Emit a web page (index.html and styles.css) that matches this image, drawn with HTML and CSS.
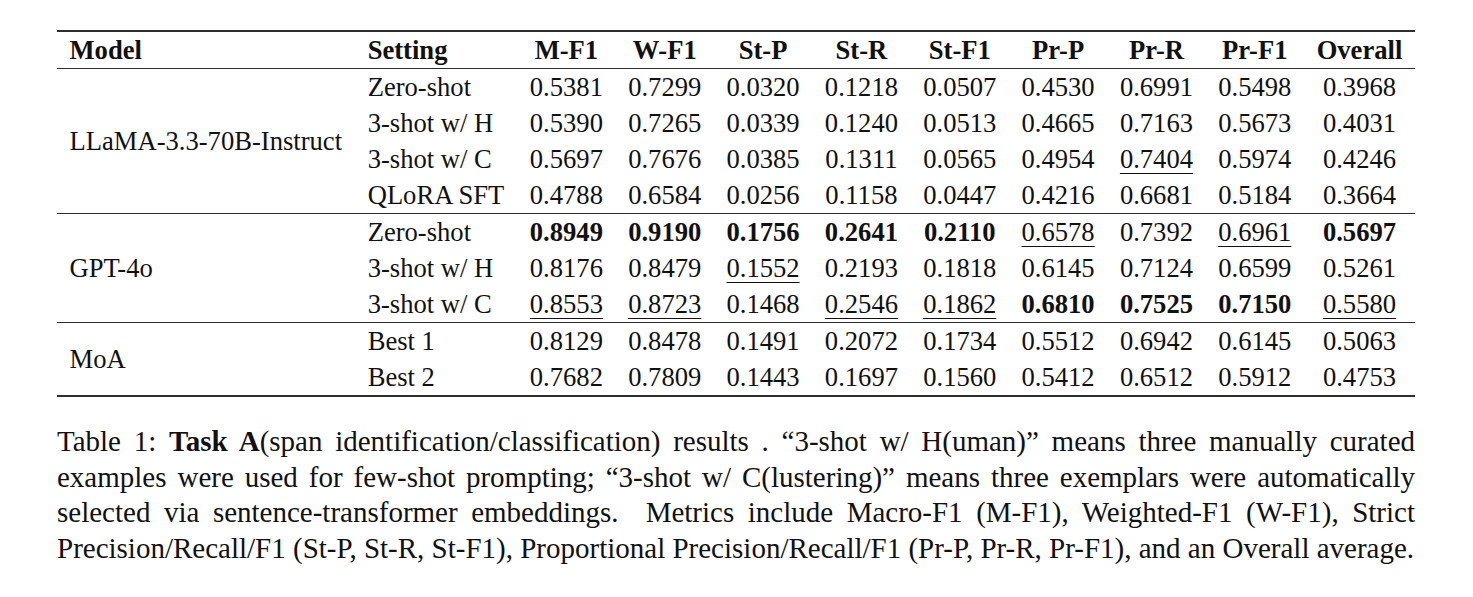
FILE: index.html
```html
<!DOCTYPE html>
<html lang="en">
<head>
<meta charset="utf-8">
<title>Table 1</title>
<link rel="stylesheet" href="styles.css">
</head>
<body>
<div class="figure">
  <table class="results">
    <thead>
      <tr>
        <th class="left">Model</th>
        <th class="left">Setting</th>
        <th>M-F1</th><th>W-F1</th><th>St-P</th><th>St-R</th><th>St-F1</th><th>Pr-P</th><th>Pr-R</th><th>Pr-F1</th><th>Overall</th>
      </tr>
    </thead>
    <tbody>
      <tr>
        <td class="left model" rowspan="4">LLaMA-3.3-70B-Instruct</td>
        <td class="left">Zero-shot</td>
        <td>0.5381</td><td>0.7299</td><td>0.0320</td><td>0.1218</td><td>0.0507</td><td>0.4530</td><td>0.6991</td><td>0.5498</td><td>0.3968</td>
      </tr>
      <tr>
        <td class="left">3-shot w/ H</td>
        <td>0.5390</td><td>0.7265</td><td>0.0339</td><td>0.1240</td><td>0.0513</td><td>0.4665</td><td>0.7163</td><td>0.5673</td><td>0.4031</td>
      </tr>
      <tr>
        <td class="left">3-shot w/ C</td>
        <td>0.5697</td><td>0.7676</td><td>0.0385</td><td>0.1311</td><td>0.0565</td><td>0.4954</td><td><span class="second">0.7404</span></td><td>0.5974</td><td>0.4246</td>
      </tr>
      <tr>
        <td class="left">QLoRA SFT</td>
        <td>0.4788</td><td>0.6584</td><td>0.0256</td><td>0.1158</td><td>0.0447</td><td>0.4216</td><td>0.6681</td><td>0.5184</td><td>0.3664</td>
      </tr>
    </tbody>
    <tbody>
      <tr>
        <td class="left model" rowspan="3">GPT-4o</td>
        <td class="left">Zero-shot</td>
        <td><b>0.8949</b></td><td><b>0.9190</b></td><td><b>0.1756</b></td><td><b>0.2641</b></td><td><b>0.2110</b></td><td><span class="second">0.6578</span></td><td>0.7392</td><td><span class="second">0.6961</span></td><td><b>0.5697</b></td>
      </tr>
      <tr>
        <td class="left">3-shot w/ H</td>
        <td>0.8176</td><td>0.8479</td><td><span class="second">0.1552</span></td><td>0.2193</td><td>0.1818</td><td>0.6145</td><td>0.7124</td><td>0.6599</td><td>0.5261</td>
      </tr>
      <tr>
        <td class="left">3-shot w/ C</td>
        <td><span class="second">0.8553</span></td><td><span class="second">0.8723</span></td><td>0.1468</td><td><span class="second">0.2546</span></td><td><span class="second">0.1862</span></td><td><b>0.6810</b></td><td><b>0.7525</b></td><td><b>0.7150</b></td><td><span class="second">0.5580</span></td>
      </tr>
    </tbody>
    <tbody>
      <tr>
        <td class="left model" rowspan="2">MoA</td>
        <td class="left">Best 1</td>
        <td>0.8129</td><td>0.8478</td><td>0.1491</td><td>0.2072</td><td>0.1734</td><td>0.5512</td><td>0.6942</td><td>0.6145</td><td>0.5063</td>
      </tr>
      <tr>
        <td class="left">Best 2</td>
        <td>0.7682</td><td>0.7809</td><td>0.1443</td><td>0.1697</td><td>0.1560</td><td>0.5412</td><td>0.6512</td><td>0.5912</td><td>0.4753</td>
      </tr>
    </tbody>
  </table>
  <p class="caption">
    <span class="line">Table 1: <b>Task A</b>(span identification/classification) results . “3-shot w/ H(uman)” means three manually curated</span>
    <span class="line">examples were used for few-shot prompting; “3-shot w/ C(lustering)” means three exemplars were automatically</span>
    <span class="line">selected via sentence-transformer embeddings.&nbsp; Metrics include Macro-F1 (M-F1), Weighted-F1 (W-F1), Strict</span>
    <span class="line last">Precision/Recall/F1 (St-P, St-R, St-F1), Proportional Precision/Recall/F1 (Pr-P, Pr-R, Pr-F1), and an Overall average.</span>
  </p>
</div>
</body>
</html>
```
FILE: styles.css
```css
html, body {
  margin: 0;
  padding: 0;
  background: #ffffff;
}

body {
  font-family: "Liberation Serif", "Times New Roman", serif;
  font-size: 26.6px;
  color: #111111;
}

.figure {
  width: 1358px;
  padding: 30px 0 0 57px;
}

.results {
  width: 1358px;
  border-collapse: collapse;
  border-top: 2px solid #2e2e2e;
  border-bottom: 2px solid #2e2e2e;
}

.results th,
.results td {
  padding: 0 12.5px;
  height: 36px;
  line-height: 36px;
  text-align: center;
  vertical-align: middle;
  white-space: nowrap;
}

.results th {
  font-weight: bold;
}

.results thead {
  border-bottom: 1px solid #2e2e2e;
}

.results tbody + tbody {
  border-top: 1px solid #2e2e2e;
}

.results .left {
  text-align: left;
}

.second {
  text-decoration: underline;
  text-decoration-thickness: 1.3px;
  text-underline-offset: 5px;
}

.caption {
  margin: 27px 0 0 0;
  font-size: 29px;
  line-height: 35.7px;
}

.caption .line {
  display: block;
  text-align: justify;
  text-align-last: justify;
}

.caption .line.last {
  text-align: left;
  text-align-last: left;
  white-space: nowrap;
}
```
